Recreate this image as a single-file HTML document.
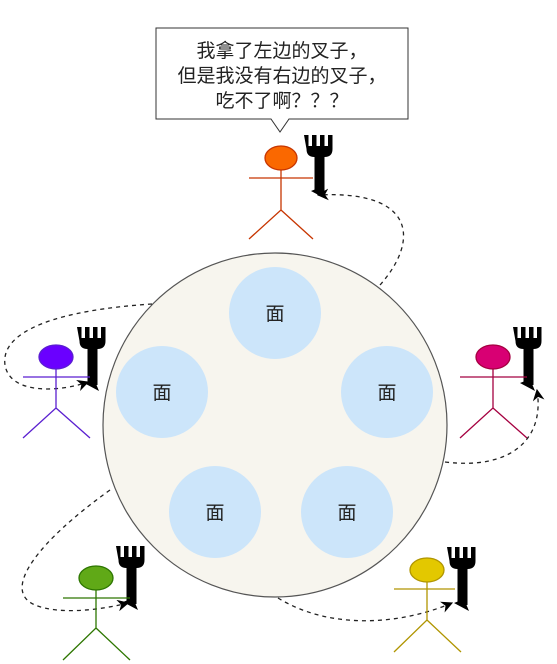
<!DOCTYPE html>
<html><head><meta charset="utf-8"><style>
html,body{margin:0;padding:0;background:#fff;width:557px;height:664px;overflow:hidden}
svg{display:block}
text{font-family:"Liberation Sans","Noto Sans CJK SC",sans-serif}
</style></head><body>
<svg width="557" height="664" viewBox="0 0 557 664" xmlns="http://www.w3.org/2000/svg">
<defs>
<marker id="ar" viewBox="0 0 10 10" refX="9" refY="5" markerWidth="9" markerHeight="9" orient="auto"><path d="M0,0 L10,5 L0,10 L3,5 Z" fill="#000"/></marker>
<g id="fork">
<path d="M0,0 h4.5 v11 h3.5 v-11 h4.5 v11 h3.5 v-11 h4.5 v11 h3.5 v-11 h4.5 v14 q0,8 -8,8 v36 h-10 v-36 q-8,0 -8,-8 z" fill="#000"/>
<path d="M7,56 L22,64 L17,52 Z" fill="#000"/>
</g>
</defs>
<path d="M156,28 H408 V119 H289 L280,132 L271,119 H156 Z" fill="#fff" stroke="#333" stroke-width="1"/>
<text x="282" y="57" font-size="19" text-anchor="middle" fill="#222">我拿了左边的叉子，</text>
<text x="282" y="82" font-size="19" text-anchor="middle" fill="#222">但是我没有右边的叉子，</text>
<text x="282" y="107" font-size="19" text-anchor="middle" fill="#222">吃不了啊？？？</text>
<circle cx="275" cy="425" r="172" fill="#f7f5ee" stroke="#555" stroke-width="1.2"/>
<g fill="#cce5fa">
<circle cx="275" cy="313" r="46"/><circle cx="162" cy="392" r="46"/><circle cx="387" cy="392" r="46"/>
<circle cx="215" cy="512" r="46"/><circle cx="347" cy="512" r="46"/>
</g>
<g font-size="19" text-anchor="middle" fill="#222">
<text x="275" y="320">面</text><text x="162" y="399">面</text><text x="387" y="399">面</text>
<text x="215" y="519">面</text><text x="347" y="519">面</text>
</g>
<g fill="none" stroke="#222" stroke-width="1.3" stroke-dasharray="4,4" marker-end="url(#ar)">
<path d="M380,285 C420,240 415,190 318,195"/>
<path d="M152,304 C60,310 0,330 5,365 C10,395 60,392 88,382"/>
<path d="M445,462 C510,470 545,440 537,390"/>
<path d="M110,490 C40,540 0,590 35,605 C60,615 100,610 128,603"/>
<path d="M278,598 C330,630 400,625 452,603"/>
</g>
<use href="#fork" x="304" y="135"/>
<use href="#fork" x="77" y="327"/>
<use href="#fork" x="513" y="327"/>
<use href="#fork" x="116" y="546"/>
<use href="#fork" x="447" y="547"/>
<g stroke-width="1.3" fill="none">
<g stroke="#c73500"><path d="M249,178 H313 M281,170 V210 L249,239 M281,210 L313,239"/></g>
<ellipse cx="281" cy="158" rx="16" ry="12" fill="#fa6800" stroke="#c73500"/>
<g stroke="#5a1fd0"><path d="M23,377 H90 M56,369 V408 L23,438 M56,408 L90,438"/></g>
<ellipse cx="56" cy="357" rx="17" ry="12" fill="#6a00ff" stroke="#5a1fd0"/>
<g stroke="#a50040"><path d="M460,377 H527 M493,369 V408 L460,438 M493,408 L527,438"/></g>
<ellipse cx="493" cy="357" rx="17" ry="12" fill="#d80073" stroke="#a50040"/>
<g stroke="#2d7600"><path d="M63,598 H130 M96,590 V628 L63,660 M96,628 L130,660"/></g>
<ellipse cx="96" cy="578" rx="17" ry="12" fill="#60a917" stroke="#2d7600"/>
<g stroke="#b09500"><path d="M394,589 H455 M427,582 V620 L394,652 M427,620 L461,652"/></g>
<ellipse cx="427" cy="570" rx="17" ry="12" fill="#e3c800" stroke="#b09500"/>
</g>
</svg>
</body></html>
